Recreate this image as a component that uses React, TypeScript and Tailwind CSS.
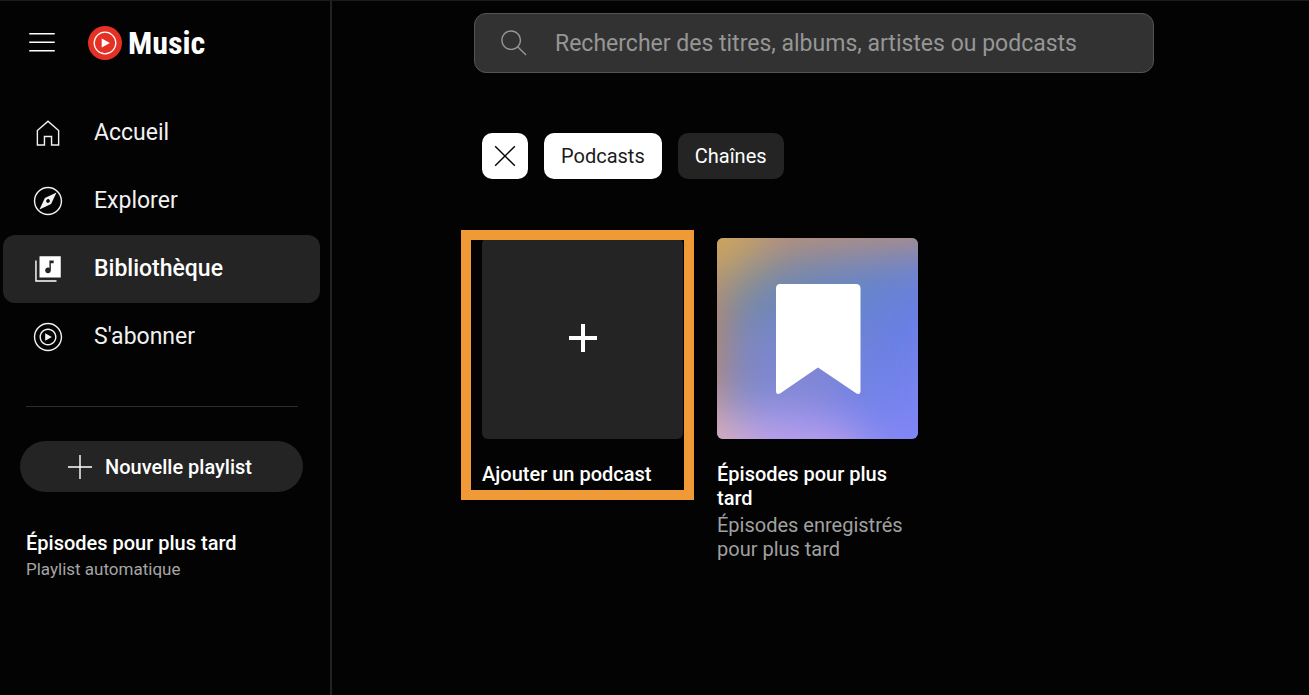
import type { ReactNode } from "react"
import { clsx } from "clsx"

interface IconProps {
  path: string
  className?: string
}

function Icon({ path, className = "size-[34px]" }: IconProps) {
  return (
    <svg viewBox="0 0 24 24" fill="currentColor" fillRule="evenodd" className={clsx("shrink-0", className)} aria-hidden="true">
      <path d={path} />
    </svg>
  )
}

const icons = {
  menu: "M21 6H3V5h18v1zm0 5H3v1h18v-1zm0 6H3v1h18v-1z",
  home: "M12 4.33l7 6.12V20h-4v-6H9v6H5v-9.55l7-6.12M12 3L4 10v11h6v-6h4v6h6V10l-8-7z",
  explore:
    "M9.8 9.8l-3.83 8.23 8.23-3.83 3.83-8.23L9.8 9.8zm3.28 2.97c-.21.29-.51.48-.86.54-.07.01-.15.02-.22.02-.28 0-.54-.08-.77-.25-.29-.21-.48-.51-.54-.86-.06-.35.02-.71.23-.99.21-.29.51-.48.86-.54.35-.06.7.02.99.23.29.21.48.51.54.86.06.35-.02.71-.23.99zM12 3c4.96 0 9 4.04 9 9s-4.04 9-9 9-9-4.04-9-9 4.04-9 9-9m0-1C6.48 2 2 6.48 2 12s4.48 10 10 10 10-4.48 10-10S17.52 2 12 2z",
  library:
    "M18 20H4V6H3v15h15v-1zM21 3H6v15h15V3zM16 6v2h-2v5c0 1.1-.9 2-2 2s-2-.9-2-2 .9-2 2-2c.37 0 .7.11 1 .28V6h3z",
  upgrade:
    "M12 3c4.96 0 9 4.04 9 9s-4.04 9-9 9-9-4.04-9-9 4.04-9 9-9m0-1C6.48 2 2 6.48 2 12s4.48 10 10 10 10-4.48 10-10S17.52 2 12 2zM12 7c2.76 0 5 2.24 5 5s-2.24 5-5 5-5-2.24-5-5 2.24-5 5-5m0-1c-3.31 0-6 2.69-6 6s2.69 6 6 6 6-2.69 6-6-2.69-6-6-6zM10 9.3v5.4l4.7-2.7z",
  plus: "M20.5 12.5h-8v8h-1v-8h-8v-1h8v-8h1v8h8z",
  plusBold: "M19 12.500h-6v6h-2v-6H5v-2h6V4.500h2v6h6z",
  search:
    "M20.87 20.17l-5.59-5.59C16.35 13.35 17 11.75 17 10c0-3.87-3.13-7-7-7s-7 3.13-7 7 3.13 7 7 7c1.75 0 3.35-.65 4.58-1.71l5.59 5.59.7-.71zM10 16c-3.31 0-6-2.69-6-6s2.69-6 6-6 6 2.69 6 6-2.69 6-6 6z",
  close: "M12.7 12l6.6 6.6-.7.7-6.6-6.6-6.6 6.6-.7-.7 6.6-6.6-6.6-6.6.7-.7 6.6 6.6 6.6-6.6.7.7z",
}

const navItems = [
  { label: "Accueil", icon: icons.home },
  { label: "Explorer", icon: icons.explore },
  { label: "Bibliothèque", icon: icons.library, active: true },
  { label: "S'abonner", icon: icons.upgrade },
]

function Logo() {
  return (
    <a href="#" aria-label="YouTube Music" className="flex items-center gap-1.5">
      <svg viewBox="0 0 34 34" className="size-[34px]" aria-hidden="true">
        <circle cx="17" cy="17" r="17" fill="#e53125" />
        <circle cx="17" cy="17" r="10.8" fill="none" stroke="#fff" strokeWidth="1.3" />
        <path d="M13.7 12.4v9.2l8.2-4.6z" fill="#fff" />
      </svg>
      <span className="font-['Roboto_Condensed',Roboto,sans-serif] text-[32px] leading-[34px] font-bold">Music</span>
    </a>
  )
}

function Sidebar() {
  return (
    <aside className="w-[332px] shrink-0 border-r-2 border-[#222]">
      <div className="flex h-[84px] items-center gap-[29px] pl-[25px]">
        <button type="button" aria-label="Menu">
          <Icon path={icons.menu} />
        </button>
        <Logo />
      </div>

      <nav className="mt-[14px] pr-2.5 pl-[3px]">
        {navItems.map((item) => (
          <a
            key={item.label}
            href="#"
            aria-current={item.active ? "page" : undefined}
            className={clsx(
              "flex h-[68px] items-center gap-[29px] rounded-xl pl-7 text-[23px]",
              item.active ? "bg-[#242424] font-medium" : "text-[#f1f1f1]",
            )}
          >
            <Icon path={item.icon} />
            {item.label}
          </a>
        ))}
      </nav>

      <hr className="mt-[35px] mr-8 ml-[26px] border-[#2c2c2c]" />

      <div className="mt-[34px] pr-[27px] pl-5">
        <button
          type="button"
          className="flex h-[51px] w-full items-center justify-center gap-2 rounded-full bg-[#242424] pr-2 text-[20px] font-medium"
        >
          <Icon path={icons.plus} />
          Nouvelle playlist
        </button>
      </div>

      <a href="#" className="mt-[37px] block pl-[26px]">
        <div className="text-[20px] leading-7 font-medium">Épisodes pour plus tard</div>
        <div className="text-[17px] leading-6 text-[#a5a5a5]">Playlist automatique</div>
      </a>
    </aside>
  )
}

interface CardProps {
  title: string
  subtitle?: string
  highlighted?: boolean
  children: ReactNode
}

function Card({ title, subtitle, highlighted, children }: CardProps) {
  return (
    <a href="#" className="relative block w-[201px]">
      {children}
      <div className="mt-[23px] text-[20px] leading-6 font-medium">{title}</div>
      {subtitle && <div className="mt-[3px] text-[20px] leading-6 text-[#a0a0a0]">{subtitle}</div>}
      {highlighted && (
        <div className="pointer-events-none absolute -top-2 -right-[11px] -left-[21px] h-[270px] border-10 border-[#f09a37]" />
      )}
    </a>
  )
}

// Bookmark cover: soft colour blobs behind a white ribbon
function EpisodesCover() {
  return (
    <svg viewBox="0 0 201 201" className="block aspect-square w-full rounded-md" aria-hidden="true">
      <defs>
        <linearGradient id="cover-base" x1="0" y1="0" x2="1" y2="1">
          <stop offset="0.2" stopColor="#7088a8" />
          <stop offset="0.5" stopColor="#6684cc" />
          <stop offset="0.7" stopColor="#6a80e4" />
          <stop offset="1" stopColor="#8286f8" />
        </linearGradient>
        <filter id="cover-blur" x="-100%" y="-100%" width="300%" height="300%">
          <feGaussianBlur stdDeviation="24" />
        </filter>
      </defs>
      <rect width="201" height="201" fill="url(#cover-base)" />
      <g filter="url(#cover-blur)">
        <rect x="-80" y="-60" width="86" height="240" fill="#c08a64" />
        <path d="M-60-60H290L270 4 60 16-20 60z" fill="#bf9078" />
        <circle cx="0" cy="-5" r="44" fill="#cca65c" />
        <ellipse cx="85" cy="125" rx="60" ry="34" fill="#8c88d4" opacity="0.8" />
        <path d="M-60 190L40 172 130 182 200 290H-60z" fill="#bda0ec" />
        <circle cx="-14" cy="212" r="44" fill="#dab0b8" />
      </g>
      <path
        d="M63 46h76q4.500 0 4.500 4.500v102.500q0 4-4 2.500L101 129.500 63 155.500q-4 1.500-4-2.500V50.500q0-4.500 4-4.500z"
        fill="#fff"
      />
    </svg>
  )
}

export default function App() {
  return (
    <div className="flex min-h-screen border-t border-[#1c1c1c] bg-[#030303] font-[Roboto,sans-serif] text-white">
      <Sidebar />

      <main className="min-w-0 flex-1 pt-3 pr-8">
        <div className="ml-[142px] flex h-[60px] max-w-[680px] items-center gap-6 rounded-xl border border-[#545454] bg-[#323232] pl-[22px] text-[#969696]">
          <Icon path={icons.search} />
          <input
            type="search"
            aria-label="Rechercher"
            placeholder="Rechercher des titres, albums, artistes ou podcasts"
            className="h-full min-w-0 flex-1 bg-transparent text-[23px] outline-none placeholder:text-[#969696]"
          />
        </div>

        <div className="mt-[60px] ml-[150px] flex gap-4 text-[20px]">
          <button
            type="button"
            aria-label="Effacer"
            className="flex size-[46px] items-center justify-center rounded-[10px] bg-white text-[#030303]"
          >
            <Icon path={icons.close} />
          </button>
          <button type="button" className="h-[46px] rounded-[10px] bg-white px-[17px] text-[#1c1c1c]">
            Podcasts
          </button>
          <button type="button" className="h-[46px] rounded-[10px] bg-[#242424] px-[17px]">
            Chaînes
          </button>
        </div>

        <div className="mt-[59px] ml-[150px] flex flex-wrap gap-[34px]">
          <Card title="Ajouter un podcast" highlighted>
            <div className="flex aspect-square items-center justify-center rounded-md bg-[#242424]">
              <Icon path={icons.plusBold} className="size-12" />
            </div>
          </Card>

          <Card title="Épisodes pour plus tard" subtitle="Épisodes enregistrés pour plus tard">
            <EpisodesCover />
          </Card>
        </div>
      </main>
    </div>
  )
}
